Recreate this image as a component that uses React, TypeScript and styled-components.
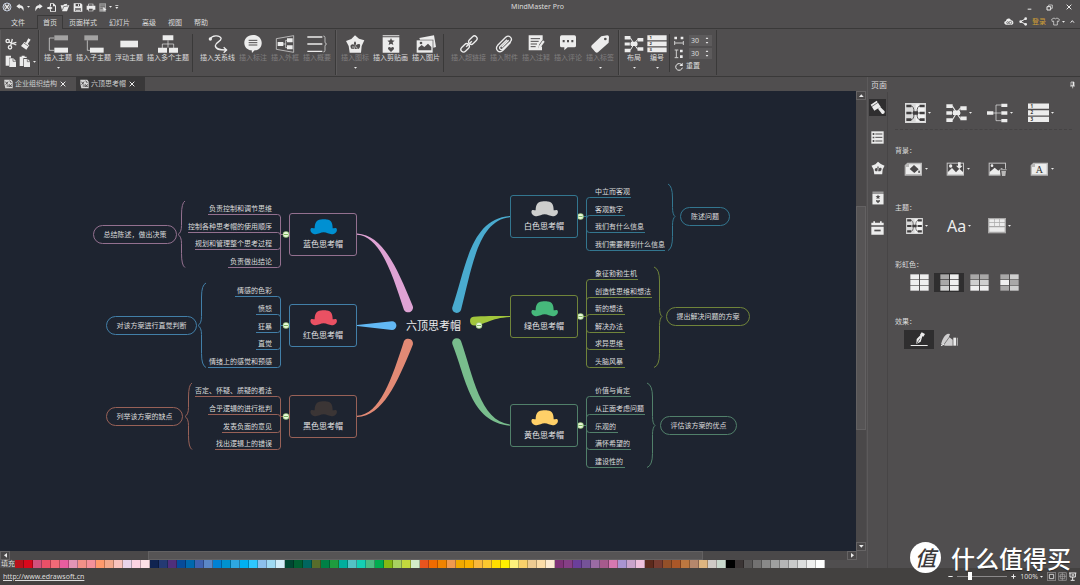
import React from "react";
import styled, { createGlobalStyle, css } from "styled-components";

const color = {
  chrome: "#504e4f",
  line: "#3a3939",
  soft: "#5c5a5b",
  dark: "#2f2e2f",
  status: "#434140",
  canvas: "#1e2430",
  text: "#dcdcdc",
  dim: "#807e7f",
  icon: "#ececec",
  grey: "#a3a2a2",
};

const GlobalStyle = createGlobalStyle`
  *, *::before, *::after { box-sizing: border-box; }
  body {
    margin: 0;
    background: ${color.chrome};
    color: ${color.text};
    font-family: "Noto Sans", "Noto Sans CJK SC", sans-serif;
    font-size: 7px;
    line-height: 10px;
  }
  button, input {
    font: inherit;
    color: inherit;
    background: none;
    border: 0;
    padding: 0;
    margin: 0;
  }
  svg { display: block; flex: none; }
`;

/* ---------- shell ---------- */

const Shell = styled.div`
  position: relative;
  display: flex;
  flex-direction: column;
  min-height: 100vh;
`;

const TitleBar = styled.header`
  display: grid;
  grid-template-columns: 1fr auto 1fr;
  align-items: center;
  height: 14px;
  padding: 0 7px 0 2px;
`;

const Title = styled.h1`
  margin: 0;
  font-size: 7px;
  font-weight: 400;
  line-height: 14px;
`;

const QuickBar = styled.div`
  display: flex;
  align-items: center;
  gap: 3px;
`;

const HistoryButtons = styled.div`
  display: flex;
  gap: 4px;
  padding: 0 1px;
`;

const WindowButtons = styled.div`
  display: flex;
  justify-content: flex-end;
  gap: 11px;
`;

const IconButton = styled.button`
  display: flex;
  align-items: center;
  gap: 2px;
`;

const MenuRow = styled.div`
  display: flex;
  justify-content: space-between;
  height: 15px;
  padding: 1px 5px 0 5px;
  border-bottom: 1px solid ${color.line};
`;

const MenuTabs = styled.nav`
  display: flex;
`;

const MenuTab = styled.button<{ $active?: boolean }>`
  height: 14px;
  padding: 0 5px;
  line-height: 13px;
  border: 1px solid transparent;
  border-bottom: 0;
  ${(p) =>
    p.$active &&
    css`
      border-color: ${color.line};
      background: ${color.chrome};
    `}
  &:first-child {
    margin-right: 6px;
  }
`;

const Account = styled.div`
  display: flex;
  align-items: center;
  gap: 5px;
`;

const LoginLink = styled.a`
  color: #cf9f35;
  text-decoration: none;
`;

/* ---------- ribbon ---------- */

const Ribbon = styled.div`
  display: flex;
  height: 48px;
  padding: 1px 1px 1px 0;
  border-bottom: 1px solid ${color.line};
`;

const Group = styled.section`
  display: flex;
  gap: 4px;
  padding: 5px 4px 0;
  border-left: 1px solid ${color.soft};
  border-right: 1px solid ${color.line};
`;

const ClipGroup = styled(Group)`
  display: grid;
  grid-template-columns: 12px 16px;
  grid-template-rows: 15px 15px;
  gap: 3px 2px;
  align-items: center;
  width: 39px;
  padding-top: 6px;
`;

const Divider = styled.span`
  width: 1px;
  height: 38px;
  margin: -1px 3px 0 -1px;
  background: ${color.line};
`;

const Tool = styled.button<{ $dim?: boolean }>`
  display: flex;
  flex-direction: column;
  align-items: center;
  align-self: flex-start;
  min-width: 20px;
  color: ${(p) => (p.$dim ? color.dim : color.text)};
  white-space: nowrap;
`;

const ToolLabel = styled.span`
  line-height: 10px;
`;

const ToolArrow = styled.span`
  margin-top: 4px;
`;

const LayoutGroup = styled(Group)`
  gap: 3px;
`;

const Spacing = styled.div`
  display: flex;
  flex-direction: column;
  gap: 2px;
  margin-left: -2px;
`;

const SpacingRow = styled.label`
  display: flex;
  align-items: center;
  gap: 5px;
  height: 11px;
`;

const Stepper = styled.span`
  display: flex;
  align-items: center;
  width: 23px;
  height: 11px;
  padding: 0 3px 0 2px;
  background: #5d5b5c;
`;

const StepperInput = styled.input`
  flex: 1;
  min-width: 0;
  height: 11px;
  line-height: 11px;
`;

/* ---------- work area ---------- */

const Main = styled.main`
  flex: 1;
  display: grid;
  grid-template-columns: minmax(0, 1fr) 213px;
`;

const Workspace = styled.div`
  display: flex;
  flex-direction: column;
  min-width: 0;
`;

const DocTabs = styled.div`
  display: flex;
  height: 14px;
`;

const DocTab = styled.button<{ $active?: boolean }>`
  display: flex;
  align-items: center;
  gap: 2px;
  padding: 0 9px 0 4px;
  color: #cfcfcf;
  line-height: 14px;
  background: ${(p) => (p.$active ? "#393839" : "none")};
`;

const CanvasRow = styled.div`
  flex: 1;
  display: flex;
`;

const Canvas = styled.div`
  flex: 1;
  display: flex;
  align-items: center;
  justify-content: center;
  min-width: 0;
  overflow: hidden;
  background: ${color.canvas};
`;

const Stage = styled.div`
  position: relative;
  flex: none;
  width: 856px;
  height: 460px;
`;

const VScroll = styled.div`
  display: flex;
  flex-direction: column;
  width: 10px;
  margin-right: 1px;
  background: #4a4849;
`;

const HScroll = styled.div`
  display: flex;
  height: 9px;
  margin-right: 10px;
  background: #4a4849;
`;

const ScrollButton = styled.button`
  display: flex;
  align-items: center;
  justify-content: center;
  width: 10px;
  height: 9px;
  border: 1px solid #666465;
`;

const VTrack = styled.div`
  flex: 1;
  display: grid;
  grid-template-rows: 106fr 223fr 112fr;
`;

const HTrack = styled.div`
  flex: 1;
  display: grid;
  grid-template-columns: 138fr 555fr 144fr;
`;

const VThumb = styled.span`
  grid-row: 2;
  background: #565455;
  border: 1px solid #636162;
`;

const HThumb = styled.span`
  grid-column: 2;
  background: #565455;
  border: 1px solid #636162;
`;

const Palette = styled.div`
  display: flex;
  align-items: center;
  height: 8px;
`;

const PaletteLabel = styled.span`
  width: 15px;
  padding-left: 1px;
  line-height: 8px;
`;

const Swatch = styled.button<{ $fill: string }>`
  width: 9px;
  height: 8px;
  background: ${(p) => p.$fill};
  border-right: 1px solid rgba(0, 0, 0, 0.25);
`;

/* ---------- mind map ---------- */

const Lines = styled.svg`
  position: absolute;
  inset: 0;
`;

const TopicBox = styled.div<{ $x: number; $y: number; $line: string }>`
  position: absolute;
  left: ${(p) => p.$x}px;
  top: ${(p) => p.$y}px;
  display: flex;
  flex-direction: column;
  align-items: center;
  gap: 3px;
  width: 68px;
  height: 43px;
  padding-top: 5px;
  border: 1px solid ${(p) => p.$line};
  border-radius: 3px;
  color: #e6e6e6;
  font-size: 8px;
  line-height: 12px;
`;

const Leaf = styled.div<{ $x: number; $y: number; $left: boolean }>`
  position: absolute;
  top: ${(p) => p.$y - 11}px;
  ${(p) => (p.$left ? `right: ${856 - p.$x}px` : `left: ${p.$x}px`)};
  line-height: 11px;
  white-space: nowrap;
`;

const Pill = styled.div<{ $x: number; $y: number; $w: number; $line: string }>`
  position: absolute;
  left: ${(p) => p.$x}px;
  top: ${(p) => p.$y}px;
  width: ${(p) => p.$w}px;
  height: 19px;
  border: 1px solid ${(p) => p.$line};
  border-radius: 10px;
  line-height: 17px;
  text-align: center;
  white-space: nowrap;
`;

const Centre = styled.div`
  position: absolute;
  left: 406px;
  top: 227px;
  color: #ededed;
  font-size: 11px;
  line-height: 16px;
  white-space: nowrap;
`;

/* ---------- side panel ---------- */

const Panel = styled.aside`
  display: flex;
  flex-direction: column;
  border-left: 1px solid ${color.soft};
`;

const PanelHead = styled.div`
  display: flex;
  align-items: center;
  justify-content: space-between;
  height: 15px;
  padding: 0 5px 0 3px;
`;

const PanelTitle = styled.h2`
  margin: 0;
  font-size: 8px;
  font-weight: 400;
  line-height: 14px;
`;

const PanelBody = styled.div`
  flex: 1;
  display: flex;
`;

const SideTabs = styled.nav`
  display: flex;
  flex-direction: column;
  gap: 13px;
  width: 22px;
  padding: 7px 0 0 1px;
  border-right: 1px solid #474546;
`;

const SideTab = styled.button<{ $active?: boolean }>`
  display: flex;
  align-items: center;
  justify-content: center;
  width: 17px;
  height: 17px;
  background: ${(p) => (p.$active ? color.dark : "none")};
`;

const Options = styled.div`
  flex: 1;
  padding: 4px 8px 0 7px;
`;

const OptionSet = styled.section`
  & + & {
    margin-top: 25px;
  }
`;

const OptionTitle = styled.h3`
  margin: 0 0 3px;
  font-size: 7px;
  font-weight: 400;
  line-height: 10px;
`;

const OptionRow = styled.div<{ $step: number; $indent: number }>`
  display: grid;
  grid-template-columns: repeat(4, ${(p) => p.$step}px);
  align-items: center;
  height: 19px;
  padding-left: ${(p) => p.$indent}px;
`;

const LayoutRow = styled(OptionRow)`
  height: 34px;
  margin-bottom: 16px;
  border-bottom: 1px dashed #454344;
`;

const Choice = styled.button<{ $active?: boolean }>`
  display: flex;
  align-items: center;
  justify-content: center;
  width: 30px;
  height: 19px;
  background: ${(p) => (p.$active ? color.dark : "none")};
`;

const FontSample = styled.span`
  color: ${color.icon};
  font-size: 16px;
  line-height: 18px;
`;

/* ---------- status ---------- */

const StatusBar = styled.footer`
  display: flex;
  align-items: center;
  justify-content: space-between;
  height: 17px;
  padding: 0 3px;
  background: ${color.status};
`;

const SiteLink = styled.a`
  color: ${color.text};
`;

const ZoomBar = styled.div`
  display: flex;
  align-items: center;
  gap: 4px;
`;

const ViewButtons = styled.div`
  display: flex;
  gap: 2px;
`;

const ZoomSlider = styled.input`
  appearance: none;
  width: 50px;
  height: 9px;
  &::-webkit-slider-runnable-track {
    height: 1px;
    background: #8b898a;
  }
  &::-webkit-slider-thumb {
    appearance: none;
    width: 4px;
    height: 8px;
    margin-top: -4px;
    background: #fff;
  }
`;

const Watermark = styled.div`
  position: absolute;
  right: 9px;
  bottom: 12px;
  display: flex;
  align-items: center;
  gap: 10px;
  color: #fff;
  font-family: "Noto Sans CJK SC", sans-serif;
  font-size: 24px;
  font-weight: 500;
  line-height: 28px;
  text-shadow: 0 1px 1px rgba(0, 0, 0, 0.4);
`;

const Seal = styled.span`
  width: 31px;
  height: 31px;
  border-radius: 50%;
  background: #fff;
  color: #3c3a3b;
  font-size: 21px;
  font-style: italic;
  line-height: 30px;
  text-align: center;
  text-shadow: none;
`;

/* ---------- icons (drawn on a grid of a third of a pixel) ---------- */

type IconProps = { w: number; h: number; box?: string; children: React.ReactNode };

const Icon = ({ w, h, box, children }: IconProps) => (
  <svg
    width={w}
    height={h}
    viewBox={box ?? `0 0 ${w * 3} ${h * 3}`}
    fill={color.icon}
    stroke="none"
    strokeWidth={3}
    aria-hidden="true"
  >
    {children}
  </svg>
);

const S = ({ d, w = 3, c = color.icon }: { d: string; w?: number; c?: string }) => (
  <path d={d} fill="none" stroke={c} strokeWidth={w} strokeLinejoin="round" />
);

const Caret = () => (
  <Icon w={3} h={2}>
    <path d="M0 0H9L4.5 5Z" />
  </Icon>
);

const STAR = "M0-11L3-4L11-3L5 2L7 10L0 6L-7 10L-5 2L-11-3L-3-4Z";
const HEART = "M0 8L-9-1Q-10-7-5-7Q-1-7 0-3Q1-7 5-7Q10-7 9-1Z";

const Logo = () => (
  <Icon w={10} h={10}>
    <circle cx="15" cy="15" r="12" fill="none" stroke="#c8d0e0" strokeWidth="3" />
    <S d="M8 8C14 10 16 20 22 22M22 8C16 10 14 20 8 22" w={4} />
    <S d="M6 15H10M20 15H24" />
  </Icon>
);
const Undo = () => (
  <Icon w={9} h={9}>
    <path d="M1 10L11 2V7C21 7 25 15 22 25C20 18 17 14 11 14V18Z" />
  </Icon>
);
const Redo = () => (
  <Icon w={9} h={9}>
    <path d="M26 10L16 2V7C6 7 2 15 5 25C7 18 10 14 16 14V18Z" />
  </Icon>
);
const NewFile = () => (
  <Icon w={10} h={9}>
    <path d="M9 1H20L27 8V26H9V20H12V24H24V10H18V3H12V9H9Z" />
    <path d="M1 12H8V8L17 15L8 22V18H1Z" />
  </Icon>
);
const OpenFile = () => (
  <Icon w={10} h={9}>
    <path d="M2 7H10L12 4L22 2L20 7H28L21 25H7Z" />
    <S d="M7 22L11 11L24 9" w={2} c={color.chrome} />
  </Icon>
);
const Save = () => (
  <Icon w={10} h={9}>
    <path d="M2 1H24L28 5V26H2Z" />
    <path d="M8 3H21V10H8ZM7 15H23V24H7Z" fill={color.chrome} />
    <path d="M15 4H18V9H15ZM9 17H21V19H9ZM9 21H21V23H9Z" />
  </Icon>
);
const Print = () => (
  <Icon w={10} h={9}>
    <path d="M7 2H22V8H28V20H22V25H7V20H2V8H7Z" />
    <path d="M9 4H20V8H9ZM9 17H20V23H9Z" fill={color.chrome} />
  </Icon>
);
const DocList = () => (
  <Icon w={8} h={9}>
    <path d="M1 1H21V26H1Z" fill={color.grey} />
    <S d="M4 6H18M4 11H18M4 16H11" w={2} c={color.chrome} />
    <path d="M12 13L23 20L17 21L15 27Z" />
  </Icon>
);
const More = () => (
  <Icon w={4} h={6}>
    <path d="M1 4H10V6H1ZM1 9H10L5.5 15Z" />
  </Icon>
);
const Minimise = () => (
  <Icon w={9} h={9}>
    <path d="M8 17H19V20H8Z" />
  </Icon>
);
const Restore = () => (
  <Icon w={9} h={9}>
    <S d="M11 10V6H22V16H18" w={2} />
    <S d="M6 11H17V21H6Z" w={3} />
  </Icon>
);
const Close = () => (
  <Icon w={8} h={8}>
    <S d="M5 5L19 19M19 5L5 19" w={3} />
  </Icon>
);
const Cloud = () => (
  <Icon w={10} h={9}>
    <path d="M7 23C-1 23-1 12 6 12C6 3 19 2 21 10C29 9 31 22 23 23Z" />
    <circle cx="19" cy="17" r="4" fill="none" stroke={color.chrome} strokeWidth="2" />
    <circle cx="11" cy="17" r="3" fill="none" stroke={color.chrome} strokeWidth="2" />
  </Icon>
);
const Share = () => (
  <Icon w={8} h={9}>
    <S d="M20 5L5 14L20 22" w={3} />
    <circle cx="20" cy="5" r="4" />
    <circle cx="5" cy="14" r="4" />
    <circle cx="20" cy="22" r="4" />
  </Icon>
);
const Shirt = () => (
  <Icon w={9} h={9}>
    <S d="M9 3L2 7L4 14L8 12V24H19V12L23 14L25 7L18 3Q13 8 9 3Z" w={2} />
  </Icon>
);
const ChevronUp = () => (
  <Icon w={5} h={5}>
    <S d="M2 11L7 5L12 11" w={3} />
  </Icon>
);

const Scissors = () => (
  <Icon w={12} h={12}>
    <circle cx="8" cy="9" r="5" fill="none" stroke={color.icon} strokeWidth="4" />
    <circle cx="15" cy="28" r="5" fill="none" stroke={color.icon} strokeWidth="4" />
    <S d="M12 12L34 21M17 23L22 3M19 17L34 13" w={4} />
  </Icon>
);
const Brush = () => (
  <Icon w={12} h={12}>
    <path d="M28 1L35 5L26 18L31 22L22 35L6 24L16 12L21 14Z" />
    <S d="M14 15L28 24" w={2} c={color.chrome} />
  </Icon>
);
const Copy = () => (
  <Icon w={12} h={13}>
    <path d="M2 2H18V8H12V32H2Z" />
    <path d="M13 10H25L33 18V36H13Z" />
    <S d="M24 10V19H33" w={2} c={color.chrome} />
  </Icon>
);
const Paste = () => (
  <Icon w={12} h={13}>
    <path d="M2 5H8V2H17V5H23V9H13V33H2Z" />
    <path d="M15 12H26L33 19V36H15Z" />
    <S d="M25 12V20H33" w={2} c={color.chrome} />
  </Icon>
);

const InsertTopic = () => (
  <Icon w={20} h={18}>
    <S d="M19 9H4V46H19" w={2} />
    <path d="M19 1H60V16H19Z" fill={color.grey} />
    <path d="M19 38H60V53H19Z" />
  </Icon>
);
const InsertSub = () => (
  <Icon w={20} h={18}>
    <S d="M10 16V46H18" w={2} />
    <path d="M1 1H42V16H1Z" fill={color.grey} />
    <path d="M18 38H59V53H18Z" />
  </Icon>
);
const Floating = () => (
  <Icon w={20} h={18}>
    <path d="M4 17H57V37H4Z" />
  </Icon>
);
const Multiple = () => (
  <Icon w={20} h={18}>
    <S d="M30 16V38M13 39V27H47V39" w={2} />
    <path d="M14 1H46V16H14ZM0 38H27V53H0ZM33 38H60V53H33Z" />
  </Icon>
);
const Relation = () => (
  <Icon w={20} h={18}>
    <circle cx="7" cy="12" r="5" />
    <S d="M7 11C12 1 34-1 39 9C43 19 20 22 22 33C25 46 42 45 56 45M47 37L56 45L47 53" w={4} />
  </Icon>
);
const Callout = () => (
  <Icon w={20} h={18}>
    <path d="M30 0C64 0 64 45 35 46L27 54L26 46C-5 44-3 0 30 0Z" />
    <S d="M17 16H43M17 23H43M17 30H43" c={color.chrome} />
  </Icon>
);
const Boundary = () => (
  <Icon w={20} h={18}>
    <S d="M4 11L56 2V52L4 43ZM24 27H32M32 16V38M32 16H38M32 38H38" w={2} />
    <path d="M8 21H25V33H8ZM36 10H53V22H36ZM36 31H53V43H36Z" />
  </Icon>
);
const Summary = () => (
  <Icon w={20} h={18}>
    <S d="M1 6H46M1 27H46M1 49H46" w={4} />
    <S d="M49 3Q54 3 54 8V21Q54 26 59 27Q54 28 54 34V46Q54 51 49 51" w={2} />
  </Icon>
);
const Clover = () => (
  <Icon w={20} h={18}>
    <path d="M30 1L42 11L58 16L50 33L48 53H14L11 33L3 18L19 12Z" />
    <path
      d="M30 19Q36 24 31 32Q38 24 45 28Q47 38 40 42H20Q14 38 17 31Q24 24 29 32Q24 24 30 19Z"
      fill={color.chrome}
    />
    <S d="M27 47L31 32M24 41V33M37 42L34 35" w={2} />
  </Icon>
);
const ClipArt = () => (
  <Icon w={20} h={18}>
    <path d="M5 1H55V4H5ZM5 7H55V53H5Z" />
    <path d={STAR} transform="translate(30 20)" fill={color.chrome} />
    <path d={HEART} transform="translate(30 43)" fill={color.chrome} />
  </Icon>
);
const Picture = () => (
  <Icon w={20} h={18}>
    <path d="M10 9L54 1L60 36L52 38V14H12Z" />
    <path d="M2 16H50V53H2Z" />
    <path d="M7 46V38L17 30L25 36L36 26L46 36V46Z" fill={color.chrome} />
    <circle cx="15" cy="24" r="4" fill={color.chrome} />
  </Icon>
);
const Chain = () => (
  <Icon w={20} h={18}>
    <g fill="none" stroke={color.icon} strokeWidth="4" transform="rotate(-45 30 27)">
      <rect x="-1" y="19" width="29" height="16" rx="8" />
      <rect x="32" y="19" width="29" height="16" rx="8" />
      <path d="M18 27H42" />
    </g>
  </Icon>
);
const Clip = () => (
  <Icon w={20} h={18}>
    <S
      d="M50 22L27 46C16 57 0 43 11 31L35 7C45-2 58 10 49 20L26 42C20 47 13 39 19 34L39 14M44 16L23 37"
      w={4}
    />
  </Icon>
);
const Note = () => (
  <Icon w={20} h={18}>
    <path d="M8 1H50V14L40 28L36 40L48 34V46H8Z" />
    <S d="M14 11H42M14 19H38M14 27H33M14 35H29" w={3} c={color.chrome} />
    <path d="M51 16L56 20L43 38L36 41L38 34Z" />
  </Icon>
);
const Comment = () => (
  <Icon w={20} h={18}>
    <path d="M11 1H49Q54 1 54 6V32Q54 37 49 37H29L19 46V37H11Q6 37 6 32V6Q6 1 11 1Z" />
    <path d="M14 15H20V22H14ZM27 15H33V22H27ZM40 15H46V22H40Z" fill={color.chrome} />
  </Icon>
);
const Tag = () => (
  <Icon w={20} h={18}>
    <path d="M34 4L52 1Q57 1 57 6L56 23L24 52Q20 55 16 51L5 38Q2 34 6 30Z" />
    <circle cx="46" cy="12" r="4" fill={color.chrome} />
  </Icon>
);

type Size = { w?: number; h?: number };

const BothSides = ({ w = 20, h = 18 }: Size) => (
  <Icon w={w} h={h} box="0 0 60 56">
    <S d="M18 8L30 27L42 13M18 48L30 28L42 45M18 28H42" w={3} />
    <path d="M1 3H19V14H1ZM1 23H17V33H1ZM1 43H19V54H1ZM20 21H40V34H20ZM41 9H59V20H41ZM41 38H59V49H41Z" />
  </Icon>
);
const TreeRight = () => (
  <Icon w={21} h={20}>
    <S d="M18 30H44M44 6H27V53H44" w={2} />
    <path d="M0 25H19V35H0ZM43 2H61V12H43ZM43 25H61V35H43ZM43 48H61V58H43Z" />
  </Icon>
);
const Numbering = ({ w = 20, h = 18 }: Size) => (
  <Icon w={w} h={h} box="0 0 60 56">
    <path d="M0 1H60V16H0ZM0 20H60V35H0ZM0 39H60V54H0Z" />
    <g fill="#333" fontSize="13" fontFamily="Noto Sans" fontWeight="700">
      <text x="7" y="13">1</text>
      <text x="7" y="32">2</text>
      <text x="7" y="51">3</text>
    </g>
  </Icon>
);
const MapBoard = ({ w = 21, h = 20 }: Size) => (
  <Icon w={w} h={h} box="0 0 63 60">
    <path d="M0 0H63V60H0Z" fill="#d9d9d9" />
    <path d="M32 4H59V56H32Z" fill="#f2f2f2" />
    <S d="M18 9Q27 9 27 28V32Q27 50 18 50M45 9Q36 9 36 28V32Q36 50 45 50M14 30H48" w={3} c="#5a5859" />
    <path
      d="M4 5H19V13H4ZM4 26H19V34H4ZM4 46H19V54H4ZM44 5H59V13H44ZM44 26H59V34H44ZM44 46H59V54H44ZM24 25H39V35H24Z"
      fill="#3f3d3e"
    />
  </Icon>
);
const GapX = () => (
  <Icon w={10} h={10}>
    <path d="M1 2H9V10H1ZM20 2H28V10H20Z" />
    <S d="M2 15V27M28 15V27M2 21H28" w={3} c="#cfcfcf" />
  </Icon>
);
const GapY = () => (
  <Icon w={10} h={10}>
    <path d="M18 2H26V10H18ZM18 19H26V27H18Z" />
    <S d="M2 3H13M2 26H13M7 3V26" w={3} c="#cfcfcf" />
  </Icon>
);
const Reset = () => (
  <Icon w={10} h={9}>
    <S d="M24 10A10 10 0 1 0 25 17" w={3} />
    <path d="M26 2V12H16Z" />
  </Icon>
);
const Steps = () => (
  <Icon w={4} h={9}>
    <path d="M2 9L6 4L10 9ZM2 18L6 23L10 18Z" />
  </Icon>
);
const DocIcon = () => (
  <Icon w={9} h={10}>
    <path d="M1 2H22L26 8V28H4L1 14Z" fill="#d6d6d6" />
    <S d="M4 8L12 17M12 8L5 17M17 5L22 12M8 21H22M16 16L23 24M23 16L16 24" w={3} c={color.chrome} />
  </Icon>
);

const Pin = () => (
  <Icon w={5} h={8}>
    <S d="M3 3H12V14H3ZM0 15H15M8 15V22" w={2} />
    <path d="M8 3H12V14H8Z" />
  </Icon>
);
const PaintTab = () => (
  <Icon w={15} h={15}>
    <path d="M2 14L20 2L32 20L13 32Z" />
    <path d="M24 26L30 20L44 34Q45 43 36 42Z" />
    <S d="M5 20L24 7" w={2} c={color.dark} />
  </Icon>
);
const ListTab = () => (
  <Icon w={13} h={13}>
    <path d="M1 1H38V38H1Z" />
    <S d="M13 9H34M13 19H34M13 30H34" w={3} c={color.chrome} />
    <path d="M5 6H10V12H5ZM5 17H10V22H5ZM5 27H10V33H5Z" fill={color.chrome} />
  </Icon>
);
const CloverTab = () => (
  <Icon w={14} h={14} box="0 0 60 56">
    <path d="M30 1L42 11L58 18L50 34L48 55H14L11 34L2 18L19 12Z" />
    <path
      d="M30 19Q36 24 31 32Q38 24 45 28Q47 38 40 42H20Q14 38 17 31Q24 24 29 32Q24 24 30 19Z"
      fill={color.chrome}
    />
    <path d="M29 30L26 50H30L32 30Z" />
  </Icon>
);
const ClipArtTab = () => (
  <Icon w={12} h={14} box="0 0 54 60">
    <path d="M2 1H52V7H2Z" fill={color.grey} />
    <path d="M2 10H52V59H2Z" />
    <path d={STAR} transform="translate(27 25)" fill={color.chrome} />
    <path d={HEART} transform="translate(27 46)" fill={color.chrome} />
  </Icon>
);
const CalendarTab = () => (
  <Icon w={13} h={14}>
    <path d="M1 5H7V1H12V5H27V1H32V5H38V13H1ZM1 17H38V41H1Z" />
    <path d="M10 26H29V31H10Z" fill={color.chrome} />
  </Icon>
);

const FRAME = "M10 2H54V41H2V10Z";
const FillBackground = () => (
  <Icon w={19} h={14}>
    <path d={FRAME} fill="#b9b8b8" />
    <path d="M15 7H50V36H6V15H15Z" />
    <path d="M17 21L30 9L44 22L31 33Z" fill="#4a4849" />
    <path d="M45 24Q51 32 45 33Q40 32 45 24Z" fill="#4a4849" />
  </Icon>
);
const ImageBackground = () => (
  <Icon w={19} h={14}>
    <path d="M2 2H54V41H2Z" fill="#c4c3c3" />
    <path d="M5 5H51V38H5Z" fill="#4a4849" />
    <path d="M5 38V31L18 18L30 31L40 20L51 30V38Z" />
    <circle cx="14" cy="12" r="5" />
    <path d="M36 1H44V11H50L40 21L30 11H36Z" />
  </Icon>
);
const RemoveBackground = () => (
  <Icon w={19} h={14}>
    <path d="M2 2H54V41H2Z" fill="#c4c3c3" />
    <path d="M5 5H51V38H5Z" fill="#4a4849" />
    <path d="M5 38V30L20 17L31 26L40 18L51 24V38Z" />
    <circle cx="12" cy="11" r="4" />
    <path d="M35 20H57V42H38Z" fill="#4a4849" />
    <path d="M37 22H56V25H37ZM40 27H54L52 42H42Z" fill="#b9b8b8" />
  </Icon>
);
const TextBackground = () => (
  <Icon w={19} h={14}>
    <path d={FRAME} fill="#b9b8b8" />
    <path d="M15 6H50V37H6V15H15Z" />
    <text x="28" y="32" textAnchor="middle" fontSize="30" fontFamily="Liberation Serif" fill="#333">
      A
    </text>
  </Icon>
);
const ColourTable = () => (
  <Icon w={18} h={16}>
    <path d="M0 0H54V46H0Z" fill="#a9a8a8" />
    <path d="M4 4H18V13H4ZM20 4H34V13H20ZM36 4H50V13H36ZM4 15H18V24H4ZM20 15H34V24H20ZM36 15H50V24H36ZM4 28H50V41H4Z" />
  </Icon>
);

const Rainbow = ({ tones }: { tones: string[] }) => (
  <Icon w={19} h={17}>
    {tones.map((t, i) => (
      <rect key={i} x={i % 2 ? 30 : 1} y={1 + Math.floor(i / 2) * 17} width="26" height="15" fill={t} />
    ))}
  </Icon>
);
const PenEffect = () => (
  <Icon w={18} h={15}>
    <path d="M35 1L45 6L40 14L37 13L32 29L19 36L20 21L31 10L30 8Z" />
    <S d="M21 34L30 20" w={2} c={color.dark} />
    <path d="M2 39H53V42H2Z" />
  </Icon>
);
const HandEffect = () => (
  <Icon w={18} h={14}>
    <path d="M3 34C8 16 14 5 24 2L30 3L27 12L38 20V38H16Z" fill="#cfcecf" />
    <path d="M40 14H48V38H40Z" />
    <path d="M50 14H54V38H50Z" fill={color.grey} />
    <S d="M8 40L34 4" w={2} c={color.chrome} />
    <S d="M3 38L12 34" w={3} />
  </Icon>
);
const FitPage = () => (
  <Icon w={9} h={9}>
    <S d="M1 1H26V26H1Z" w={2} c="#a9a8a8" />
    <S d="M7 7H20V20H7Z" w={3} c="#cfcfcf" />
  </Icon>
);
const FitWidth = () => (
  <Icon w={9} h={9}>
    <S d="M2 2H25V25H2ZM13 2V25M2 13H25" w={2} c="#a9a8a8" />
    <S d="M7 7H20V20H7Z" w={2} c="#a9a8a8" />
  </Icon>
);
const Present = () => (
  <Icon w={8} h={9}>
    <S d="M0 3H22M3 3V15H19V3M11 15V24M5 25H17" w={3} />
    <path d="M8 7H15V11H8Z" />
  </Icon>
);

const Hat = ({ fill }: { fill: string }) => (
  <Icon w={27} h={16}>
    <path
      fill={fill}
      d="M14 28C14 12 20 1 33 1.500C38 0 46 0 50 1.500C63 1 68 12 68 28C72 28 76 26 79 28C83 33 80 43 71 45C58 48 52 40 41 40C30 40 24 48 11 45C2 43 -1 33 3 28C6 26 10 28 14 28Z"
    />
  </Icon>
);

/* ---------- data ---------- */

type Branch = {
  name: string;
  hat: string;
  line: string;
  left: boolean;
  top: number;
  mid: number;
  leaves: [string, number, number][];
  brace: { edge: number; from: number; tip: number };
  note: { text: string; x: number; w: number };
};

const branches: Branch[] = [
  {
    name: "蓝色思考帽", hat: "#0090d2", line: "#93708f", left: true, top: 122, mid: 143,
    leaves: [["负责控制和调节思维", 208, 123], ["控制各种思考帽的使用顺序", 188, 141], ["规划和管理整个思考过程", 195, 158], ["负责做出结论", 228, 176]],
    brace: { edge: 185, from: 110, tip: 178 },
    note: { text: "总结陈述，做出决策", x: 93, w: 84 },
  },
  {
    name: "红色思考帽", hat: "#ea5163", line: "#427fa8", left: true, top: 213, mid: 234,
    leaves: [["情感的色彩", 235, 205], ["愤怒", 256, 223], ["狂暴", 256, 241], ["直觉", 256, 258], ["情绪上的感觉和预感", 208, 276]],
    brace: { edge: 206, from: 192, tip: 198 },
    note: { text: "对该方案进行直觉判断", x: 106, w: 91 },
  },
  {
    name: "黑色思考帽", hat: "#3b3535", line: "#986157", left: true, top: 304, mid: 325,
    leaves: [["否定、怀疑、质疑的看法", 195, 305], ["合乎逻辑的进行批判", 208, 323], ["发表负面的意见", 222, 341], ["找出逻辑上的错误", 215, 358]],
    brace: { edge: 192, from: 292, tip: 185 },
    note: { text: "列举该方案的缺点", x: 106, w: 77 },
  },
  {
    name: "白色思考帽", hat: "#cdcecd", line: "#33768f", left: false, top: 104, mid: 125,
    leaves: [["中立而客观", 631, 106], ["客观数字", 625, 124], ["我们有什么信息", 645, 141], ["我们需要得到什么信息", 665, 159]],
    brace: { edge: 668, from: 93, tip: 675 },
    note: { text: "陈述问题", x: 680, w: 50 },
  },
  {
    name: "绿色思考帽", hat: "#46b87b", line: "#70843a", left: false, top: 204, mid: 225,
    leaves: [["象征勃勃生机", 638, 188], ["创造性思维和想法", 652, 206], ["新的想法", 625, 223], ["解决办法", 625, 241], ["求异思维", 625, 258], ["头脑风暴", 625, 276]],
    brace: { edge: 654, from: 176, tip: 662 },
    note: { text: "提出解决问题的方案", x: 666, w: 84 },
  },
  {
    name: "黄色思考帽", hat: "#ffd068", line: "#51806a", left: false, top: 313, mid: 334,
    leaves: [["价值与肯定", 631, 305], ["从正面考虑问题", 645, 323], ["乐观的", 618, 341], ["满怀希望的", 631, 358], ["建设性的", 625, 376]],
    brace: { edge: 647, from: 292, tip: 655 },
    note: { text: "评估该方案的优点", x: 660, w: 77 },
  },
];

const stems: [string, string][] = [
  ["#dfa3d4", "M357 142.5C383 144 397 177 412.3 214A4.5 4.5 0 0 1 404 219C392 182 380 145 357 143.8Z"],
  ["#62b8f4", "M357 234L392 230.2A4.4 4.4 0 0 1 392 239L357 235Z"],
  ["#e28a75", "M357 326C383 325 397 292 412.3 255A4.5 4.5 0 0 0 404 250C392 287 380 324 357 324.8Z"],
  ["#4aabcf", "M510 125C470 128 466 177 452.5 215.7A4.5 4.5 0 0 0 461 219C472 177 478 129 510 126.2Z"],
  ["#a2c63c", "M510 225C495 225 482 225 473.5 225.8A4.4 4.4 0 0 0 474.5 234.5C485 234 490 227 510 226Z"],
  ["#79bd8d", "M510 334.7C470 331 466 287 452.5 253.5A4.5 4.5 0 0 1 461 250C473 284 480 330 510 333.5Z"],
];

const swatches = (
  "b8111b d9081c d0517d ea5068 f16a77 e85d9f e295b7 f29188 f4919b ff9a6c f2a98c f8c3bd e9d4ea fbd3e2 fce1e6 " +
  "0f2350 243a73 502f7b 074b99 0068ad 4062b0 5b87c6 0081d4 0092ce 2ea7e0 00b0f0 2ec7ff 8cbfec 9fd9f2 d3edf9 " +
  "004732 006032 00665f 576c2b 008046 1f9c3e 00ae9d 53c2c5 15cfb4 4cbb84 00ad50 85b914 a9d260 c2d93e d3ecc9 " +
  "e8541e f06b00 f08300 f19a4f f2a900 fbb100 f9b83d fbc72f ffdc00 fff000 fdf17c f9d16a edcb92 fbdca8 fdebd3 " +
  "7f3378 863f86 6b3f9a 755398 9a6ba3 a65a8c d678b0 a994d1 c9a3cb efc0dc " +
  "5c2a1d 773c31 935029 aa5728 bd7840 b5876c deb580 cfcac6 c9d8cd " +
  "000000 3b3535 595757 727171 898989 9fa0a0 b5b5b6 c9caca dcdddd efefef ffffff"
).split(" ");

/* ---------- mind map parts ---------- */

const bracePath = ({ brace, leaves, mid, left }: Branch) => {
  const s = left ? 1 : -1;
  const end = leaves[leaves.length - 1][2] + 0.5;
  const spine = brace.tip + s * 3 + 0.5;
  const m = mid + 0.5;
  return `M${brace.edge} ${brace.from}Q${spine} ${brace.from + 2} ${spine} ${brace.from + 14}V${m - 9}Q${spine} ${m - 2} ${brace.tip} ${m}Q${spine} ${m + 2} ${spine} ${m + 9}V${end - 14}Q${spine} ${end - 2} ${brace.edge} ${end}`;
};

const leafPaths = ({ leaves, left, mid }: Branch) => {
  const bus = left ? 280.5 : 586.5;
  const s = left ? -1 : 1;
  const hub = left ? 285 : 581;
  const lines = leaves.map(([, x, y]) => {
    const bend = y + 0.5 < mid ? 3 : -3;
    return `M${x} ${y + 0.5}H${bus + s * 3}Q${bus} ${y + 0.5} ${bus} ${y + 0.5 + bend}`;
  });
  return `${lines.join("")}M${bus} ${leaves[0][2] + 3}V${leaves[leaves.length - 1][2] - 2}M${bus} ${mid + 0.5}H${hub}`;
};

const Collapse = ({ x, y }: { x: number; y: number }) => (
  <g>
    <circle cx={x} cy={y} r="3.2" fill="#a8d08a" />
    <circle cx={x} cy={y} r="2.4" fill="#e9f7dc" />
    <path d={`M${x - 2} ${y}H${x + 2}`} stroke="#7fb562" />
  </g>
);

const MindMap = () => (
  <Stage>
    <Lines width="856" height="460" viewBox="0 0 856 460" fill="none" aria-hidden="true">
      {stems.map(([fill, d]) => (
        <path key={fill} d={d} fill={fill} />
      ))}
      {branches.map((b) => (
        <g key={b.name} stroke={b.line}>
          <path d={bracePath(b)} />
          <path d={leafPaths(b)} />
        </g>
      ))}
      {branches.map((b) => (
        <Collapse key={b.name} x={b.left ? 286 : 580.5} y={b.mid + 0.5} />
      ))}
      <Collapse x={479} y={234.5} />
    </Lines>
    <Centre>六顶思考帽</Centre>
    {branches.map((b) => (
      <React.Fragment key={b.name}>
        <TopicBox $x={b.left ? 289 : 510} $y={b.top} $line={b.line}>
          <Hat fill={b.hat} />
          {b.name}
        </TopicBox>
        {b.leaves.map(([text, , y]) => (
          <Leaf key={text} $x={b.left ? 272 : 595} $y={y} $left={b.left}>
            {text}
          </Leaf>
        ))}
        <Pill $x={b.note.x} $y={b.mid - 9} $w={b.note.w} $line={b.line}>
          {b.note.text}
        </Pill>
      </React.Fragment>
    ))}
  </Stage>
);

/* ---------- ribbon parts ---------- */

type ToolSpec = { label: string; icon: React.ReactNode; dim?: boolean; menu?: boolean };

const Tools = ({ items }: { items: ToolSpec[] }) => (
  <>
    {items.map((t) => (
      <Tool key={t.label} $dim={t.dim}>
        {t.icon}
        <ToolLabel>{t.label}</ToolLabel>
        {t.menu && (
          <ToolArrow>
            <Caret />
          </ToolArrow>
        )}
      </Tool>
    ))}
  </>
);

const quick: [string, React.ReactNode][] = [
  ["新建", <NewFile />],
  ["打开", <OpenFile />],
  ["保存", <Save />],
  ["打印", <Print />],
];

const light = "#efefef";
const mid = "#a9a8a8";
const soft = "#cfcfcf";
const rainbows = [
  [light, light, light, light, light, light],
  [mid, light, mid, light, soft, light],
  [mid, mid, soft, soft, light, light],
  [mid, soft, light, mid, mid, soft],
];

export default function App() {
  return (
    <Shell>
      <GlobalStyle />
      <TitleBar>
        <QuickBar>
          <Logo />
          <HistoryButtons>
            <IconButton aria-label="撤销"><Undo /><Caret /></IconButton>
            <IconButton aria-label="重做"><Redo /></IconButton>
          </HistoryButtons>
          {quick.map(([label, icon]) => (
            <IconButton key={label} aria-label={label}>{icon}</IconButton>
          ))}
          <IconButton aria-label="导出"><DocList /><Caret /></IconButton>
          <IconButton aria-label="更多"><More /></IconButton>
        </QuickBar>
        <Title>MindMaster Pro</Title>
        <WindowButtons>
          <IconButton aria-label="最小化"><Minimise /></IconButton>
          <IconButton aria-label="还原"><Restore /></IconButton>
          <IconButton aria-label="关闭"><Close /></IconButton>
        </WindowButtons>
      </TitleBar>

      <MenuRow>
        <MenuTabs>
          {["文件", "首页", "页面样式", "幻灯片", "高级", "视图", "帮助"].map((t) => (
            <MenuTab key={t} $active={t === "首页"}>{t}</MenuTab>
          ))}
        </MenuTabs>
        <Account>
          <IconButton aria-label="云"><Cloud /></IconButton>
          <IconButton aria-label="分享"><Share /></IconButton>
          <LoginLink href="#login">登录</LoginLink>
          <IconButton aria-label="主题"><Shirt /><Caret /></IconButton>
          <IconButton aria-label="收起"><ChevronUp /></IconButton>
        </Account>
      </MenuRow>

      <Ribbon>
        <ClipGroup>
          <IconButton aria-label="剪切"><Scissors /></IconButton>
          <IconButton aria-label="格式刷"><Brush /></IconButton>
          <IconButton aria-label="复制"><Copy /></IconButton>
          <IconButton aria-label="粘贴"><Paste /><Caret /></IconButton>
        </ClipGroup>
        <Group>
          <Tools
            items={[
              { label: "插入主题", icon: <InsertTopic />, menu: true },
              { label: "插入子主题", icon: <InsertSub /> },
              { label: "浮动主题", icon: <Floating /> },
              { label: "插入多个主题", icon: <Multiple /> },
            ]}
          />
          <Divider />
          <Tools
            items={[
              { label: "插入关系线", icon: <Relation /> },
              { label: "插入标注", icon: <Callout />, dim: true },
              { label: "插入外框", icon: <Boundary />, dim: true },
              { label: "插入概要", icon: <Summary />, dim: true },
            ]}
          />
        </Group>
        <Group>
          <Tools
            items={[
              { label: "插入图标", icon: <Clover />, dim: true, menu: true },
              { label: "插入剪贴画", icon: <ClipArt /> },
              { label: "插入图片", icon: <Picture /> },
            ]}
          />
          <Divider />
          <Tools
            items={[
              { label: "插入超链接", icon: <Chain />, dim: true },
              { label: "插入附件", icon: <Clip />, dim: true },
              { label: "插入注释", icon: <Note />, dim: true },
              { label: "插入评论", icon: <Comment />, dim: true },
              { label: "插入标签", icon: <Tag />, dim: true, menu: true },
            ]}
          />
        </Group>
        <LayoutGroup>
          <Tools
            items={[
              { label: "布局", icon: <BothSides />, menu: true },
              { label: "编号", icon: <Numbering />, menu: true },
            ]}
          />
          <Divider />
          <Spacing>
            <SpacingRow>
              <GapX />
              <Stepper><StepperInput aria-label="水平间距" defaultValue="30" /><Steps /></Stepper>
            </SpacingRow>
            <SpacingRow>
              <GapY />
              <Stepper><StepperInput aria-label="垂直间距" defaultValue="30" /><Steps /></Stepper>
            </SpacingRow>
            <IconButton><Reset />重置</IconButton>
          </Spacing>
        </LayoutGroup>
      </Ribbon>

      <Main>
        <Workspace>
          <DocTabs>
            <DocTab><DocIcon />企业组织结构<Close /></DocTab>
            <DocTab $active><DocIcon />六顶思考帽<Close /></DocTab>
          </DocTabs>
          <CanvasRow>
            <Canvas>
              <MindMap />
            </Canvas>
            <VScroll>
              <ScrollButton aria-label="向上"><Icon w={5} h={3}><path d="M0 9L7 1L14 9Z" /></Icon></ScrollButton>
              <VTrack><VThumb /></VTrack>
              <ScrollButton aria-label="向下"><Icon w={5} h={3}><path d="M0 0L7 8L14 0Z" /></Icon></ScrollButton>
            </VScroll>
          </CanvasRow>
          <HScroll>
            <ScrollButton aria-label="向左"><Icon w={3} h={5}><path d="M9 0V14L0 7Z" /></Icon></ScrollButton>
            <HTrack><HThumb /></HTrack>
            <ScrollButton aria-label="向右"><Icon w={3} h={5}><path d="M0 0V14L9 7Z" /></Icon></ScrollButton>
          </HScroll>
          <Palette>
            <PaletteLabel>填充</PaletteLabel>
            {swatches.map((c) => (
              <Swatch key={c} $fill={`#${c}`} aria-label={`#${c}`} />
            ))}
          </Palette>
        </Workspace>

        <Panel>
          <PanelHead>
            <PanelTitle>页面</PanelTitle>
            <IconButton aria-label="固定"><Pin /></IconButton>
          </PanelHead>
          <PanelBody>
            <SideTabs>
              <SideTab $active aria-label="页面"><PaintTab /></SideTab>
              <SideTab aria-label="大纲"><ListTab /></SideTab>
              <SideTab aria-label="图标"><CloverTab /></SideTab>
              <SideTab aria-label="剪贴画"><ClipArtTab /></SideTab>
              <SideTab aria-label="任务"><CalendarTab /></SideTab>
            </SideTabs>
            <Options>
              <LayoutRow $step={41} $indent={10}>
                <IconButton aria-label="主题布局"><MapBoard /><Caret /></IconButton>
                <IconButton aria-label="双向"><BothSides w={21} h={20} /><Caret /></IconButton>
                <IconButton aria-label="树状"><TreeRight /><Caret /></IconButton>
                <IconButton aria-label="编号样式"><Numbering w={21} h={20} /><Caret /></IconButton>
              </LayoutRow>
              <OptionSet>
                <OptionTitle>背景：</OptionTitle>
                <OptionRow $step={42} $indent={9}>
                  <IconButton aria-label="背景填充"><FillBackground /><Caret /></IconButton>
                  <IconButton aria-label="背景图片"><ImageBackground /><Caret /></IconButton>
                  <IconButton aria-label="删除背景"><RemoveBackground /></IconButton>
                  <IconButton aria-label="水印"><TextBackground /><Caret /></IconButton>
                </OptionRow>
              </OptionSet>
              <OptionSet>
                <OptionTitle>主题：</OptionTitle>
                <OptionRow $step={41} $indent={11}>
                  <IconButton aria-label="主题样式"><MapBoard w={17} h={16} /><Caret /></IconButton>
                  <IconButton aria-label="主题字体"><FontSample>Aa</FontSample><Caret /></IconButton>
                  <IconButton aria-label="主题颜色"><ColourTable /><Caret /></IconButton>
                </OptionRow>
              </OptionSet>
              <OptionSet>
                <OptionTitle>彩虹色：</OptionTitle>
                <OptionRow $step={30} $indent={9}>
                  {rainbows.map((tones, i) => (
                    <Choice key={i} $active={i === 1} aria-label={`彩虹色 ${i + 1}`}>
                      <Rainbow tones={tones} />
                    </Choice>
                  ))}
                </OptionRow>
              </OptionSet>
              <OptionSet>
                <OptionTitle>效果：</OptionTitle>
                <OptionRow $step={30} $indent={9}>
                  <Choice $active aria-label="普通"><PenEffect /></Choice>
                  <Choice aria-label="手绘"><HandEffect /></Choice>
                </OptionRow>
              </OptionSet>
            </Options>
          </PanelBody>
        </Panel>
      </Main>

      <StatusBar>
        <SiteLink href="http://www.edrawsoft.cn">http://www.edrawsoft.cn</SiteLink>
        <ZoomBar>
          <IconButton aria-label="缩小"><Icon w={5} h={5}><path d="M1 6H14V9H1Z" /></Icon></IconButton>
          <ZoomSlider type="range" aria-label="缩放" min={0} max={400} defaultValue={96} />
          <IconButton aria-label="放大"><Icon w={5} h={5}><path d="M1 6H6V1H9V6H14V9H9V14H6V9H1Z" /></Icon></IconButton>
          <IconButton>100%<Caret /></IconButton>
          <ViewButtons>
            <IconButton aria-label="适合页面"><FitPage /></IconButton>
            <IconButton aria-label="适合宽度"><FitWidth /></IconButton>
            <IconButton aria-label="演示"><Present /></IconButton>
          </ViewButtons>
        </ZoomBar>
      </StatusBar>

      <Watermark>
        <Seal>值</Seal>
        什么值得买
      </Watermark>
    </Shell>
  );
}
